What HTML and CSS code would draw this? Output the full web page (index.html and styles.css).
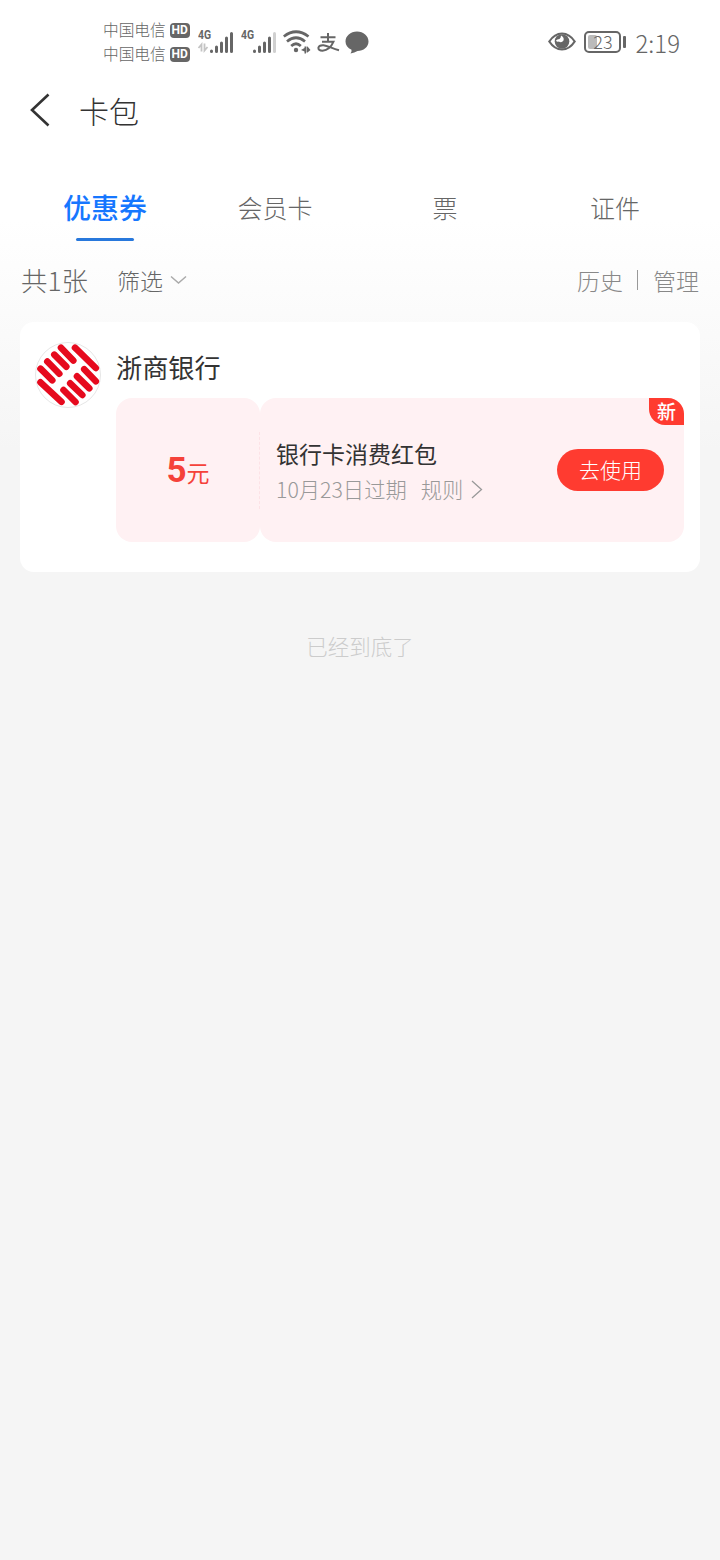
FILE: index.html
```html
<!DOCTYPE html>
<html lang="zh-CN">
<head>
    <meta charset="utf-8">
    <meta name="viewport" content="width=720">
    <title>卡包</title>
    <link rel="stylesheet" href="styles.css">
</head>
<body>
    <div class="status-bar">
        <div class="carriers">
            <div class="carrier"><span>中国电信</span><b class="hd">HD</b></div>
            <div class="carrier"><span>中国电信</span><b class="hd">HD</b></div>
        </div>
        <div class="signal">
            <span class="net">4G</span>
            <svg width="38" height="26" viewBox="0 0 38 26">
                <g fill="none" stroke="#c4c4c4" stroke-width="1.8"><path d="M4.500 22.500v-7l-3 3.500M7.500 14.500v7l3-3.500"/></g>
                <g stroke="#666" stroke-width="3" stroke-linecap="round"><path d="M14.500 22v.5M19.500 18v4.500M24.500 14v8.500M29.500 9v13.500M34.500 4.500v18"/></g>
            </svg>
        </div>
        <div class="signal">
            <span class="net">4G</span>
            <svg width="38" height="26" viewBox="0 0 38 26">
                <g stroke="#666" stroke-width="3" stroke-linecap="round"><path d="M14.500 22v.5M19.500 18v4.500M24.500 14v8.500M29.500 9v13.500"/></g>
                <path d="M34.500 4.500v18" stroke="#d0d0d0" stroke-width="3" stroke-linecap="round"/>
            </svg>
        </div>
        <svg class="wifi" width="28" height="24" viewBox="0 0 28 24">
            <g fill="none" stroke="#666" stroke-width="2.700">
                <path d="M.8 6.500Q13 -3 25.500 6.500"/>
                <path d="M4 11.500Q13 4 22 11.500"/>
                <path d="M8.200 16Q13 11.500 17.800 16"/>
            </g>
            <circle cx="13" cy="20" r="2.200" fill="#666"/>
            <path d="M18 20l3.500-2v-1.500h1.500v7h-1.500v-2zM27.500 20l-3 2.500h-1v-6h1z" fill="#666"/>
        </svg>
        <svg class="alipay" width="23" height="20" viewBox="0 0 23 20">
            <path d="M3.500 4.300h15M11 0v8.500M5 8.700h11.500Q13 17 5.500 17.700 1.200 17.500 1.400 14.800 1.900 12 6.500 12.200C11 12.700 15 15.500 22 17.200" fill="none" stroke="#666" stroke-width="2"/>
        </svg>
        <svg class="bubble" width="24" height="23" viewBox="0 0 24 23">
            <path d="M12 0.500C18.500 0.500 23.500 5 23.500 10.500S18.500 20 12.500 20Q9.500 21.800 5.500 22.500Q7 20.500 6.500 18.800C2.500 17 .5 14 .5 10.500.5 5 5.500.5 12 .5z" fill="#666"/>
        </svg>
        <div class="status-right">
            <svg class="eye" width="28" height="19" viewBox="0 0 28 19">
                <path d="M1.300 9.500Q6.500 1.500 14 1.500T26.700 9.500Q21.500 17.500 14 17.500T1.300 9.500z" fill="none" stroke="#666" stroke-width="2.200"/>
                <circle cx="14" cy="9.500" r="7.300" fill="#666"/>
                <path d="M13 3.500Q16.500 5.500 15.500 8.500 13.500 11.500 10.800 9.500 9 10.500 8 8.500 9 7 11.500 7 13 5.500 13 3.500z" fill="#fff"/>
            </svg>
            <div class="battery"><i></i><span>23</span></div>
            <div class="battery-tip"></div>
            <span class="time">2:19</span>
        </div>
    </div>

    <div class="title-bar">
        <svg width="20" height="34" viewBox="0 0 20 34"><path d="M18.500 1.500L2 17l16.500 15.500" fill="none" stroke="#333" stroke-width="2.600"/></svg>
        <h1>卡包</h1>
    </div>

    <div class="tabs">
        <div class="tab active">优惠券</div>
        <div class="tab">会员卡</div>
        <div class="tab">票</div>
        <div class="tab">证件</div>
    </div>

    <div class="toolbar">
        <span class="count">共1张</span>
        <span class="filter">筛选</span>
        <svg width="17" height="10" viewBox="0 0 17 10"><path d="M1 1.500l7.500 6.500L16 1.500" fill="none" stroke="#aaa" stroke-width="1.500"/></svg>
        <span class="history">历史</span>
        <i class="line"></i>
        <span class="manage">管理</span>
    </div>

    <div class="card">
        <svg class="logo" width="66" height="66" viewBox="0 0 66 66">
            <circle cx="33" cy="33" r="32.500" fill="#fff" stroke="#e6e6e6"/>
            <g stroke="#e60a1e" stroke-width="6.600" stroke-linecap="round">
                <path d="M40 5.700L60.800 26M26 5.700L38.300 18.500M19.300 12.700L31.300 24.700M12.300 19.500L24.300 31.700M5.500 26.700L17.300 38.300"/>
                <path d="M5.500 40.300L26.500 59.800M28.500 48L40.500 60M35.200 41.300L47.300 53M42 34.300L54.300 46.300M49.200 27.200L60.800 39.300"/>
            </g>
        </svg>
        <div class="card-main">
            <h2>浙商银行</h2>
            <div class="coupon">
                <div class="amount"><b>5</b><span>元</span></div>
                <div class="detail">
                    <div class="info">
                        <div class="name">银行卡消费红包</div>
                        <div class="rule">
                            <span>10月23日过期</span>
                            <span class="rule-link">规则</span>
                            <svg width="12" height="19" viewBox="0 0 12 19"><path d="M1 1l9.500 8.500L1 18" fill="none" stroke="#999" stroke-width="1.300"/></svg>
                        </div>
                    </div>
                    <div class="btn">去使用</div>
                    <span class="badge">新</span>
                </div>
            </div>
        </div>
    </div>

    <div class="end">已经到底了</div>
</body>
</html>
```

FILE: styles.css
```css
* {
    box-sizing: border-box;
}

body {
    margin: 0;
    min-height: 1560px;
    font-family: "Noto Sans CJK SC", sans-serif;
    font-weight: 300;
    color: #333;
    background: #f5f5f5 linear-gradient(#fff, #fff 220px, #f5f5f5 450px) no-repeat;
    white-space: nowrap;
}

h1, h2 {
    margin: 0;
    font-weight: 400;
}

svg {
    display: block;
    flex: none;
}

/* 状态栏 */
.status-bar {
    display: flex;
    height: 80px;
    padding: 18px 40px 0 103px;
    color: #666;
}

.carriers {
    width: 94px;
}

.carrier {
    display: flex;
    align-items: center;
    height: 24px;
    font-size: 15.7px;
    line-height: 24px;
}

.hd {
    width: 20px;
    height: 15px;
    margin: 0 0 0 4px;
    border-radius: 4px;
    background: #666;
    color: #fff;
    font: bold 12px/15px Roboto, sans-serif;
    text-align: center;
}

.signal {
    position: relative;
    width: 43px;
    padding-top: 11px;
}

.net {
    position: absolute;
    left: 1px;
    top: 10px;
    font: bold 13px/14px Roboto, sans-serif;
    transform: scaleX(.8);
    transform-origin: 0 0;
}

.wifi {
    margin-top: 12px;
}

.alipay {
    margin: 15px 0 0 6px;
}

.bubble {
    margin: 13px 0 0 5px;
}

.status-right {
    display: flex;
    align-items: center;
    height: 48px;
    margin-left: auto;
}

.eye {
    margin-top: -2px;
}

.battery {
    position: relative;
    width: 37px;
    height: 22px;
    margin-left: 8px;
    border: 2px solid #666;
    border-radius: 5px;
    font-size: 18px;
    line-height: 17px;
    text-align: center;
}

.battery span {
    position: relative;
}

.battery i {
    position: absolute;
    left: 2px;
    top: 2px;
    width: 9px;
    height: 14px;
    border-radius: 2px;
    background: #bbb;
}

.battery-tip {
    width: 3px;
    height: 12px;
    margin-left: 2px;
    border-radius: 1px;
    background: #666;
}

.time {
    margin-left: 9px;
    font-size: 24px;
    line-height: 29px;
}

/* 标题 */
.title-bar {
    display: flex;
    align-items: center;
    height: 60px;
    padding-left: 30px;
}

.title-bar h1 {
    margin-left: 29px;
    font-size: 30px;
    line-height: 60px;
    font-weight: 300;
}

/* 选项卡 */
.tabs {
    display: flex;
    height: 101px;
    padding: 36px 20px 0;
}

.tab {
    position: relative;
    flex: 1;
    height: 65px;
    font-size: 25px;
    line-height: 62px;
    text-align: center;
    color: #666;
}

.tab.active {
    font-size: 28px;
    font-weight: 500;
    color: #1677ff;
}

.tab.active:after {
    content: "";
    position: absolute;
    left: 50%;
    bottom: 0;
    width: 58px;
    height: 3px;
    margin-left: -29px;
    border-radius: 2px;
    background: #2878dc;
}

.toolbar {
    display: flex;
    align-items: center;
    height: 81px;
    padding: 0 21px 4px;
    font-size: 23px;
    line-height: 76px;
    color: #666;
}

.count {
    font-size: 26.4px;
}

.filter {
    margin: 0 7px 0 29px;
}

.history {
    margin-left: auto;
    color: #888;
}

.line {
    width: 1px;
    height: 20px;
    margin: 0 15px 0 14px;
    background: #999;
}

.manage {
    color: #888;
}

/* 卡券 */
.card {
    display: flex;
    height: 250px;
    margin: 0 20px;
    padding: 20px 16px 0 15px;
    border-radius: 14px;
    background: #fff;
}

.card-main {
    flex: 1;
    margin-left: 15px;
}

.card-main h2 {
    height: 56px;
    font-size: 26.2px;
    line-height: 50px;
}

.coupon {
    display: flex;
    height: 144px;
}

.amount,
.detail {
    border-radius: 16px;
    background: #fff1f3;
}

.amount {
    display: flex;
    align-items: baseline;
    justify-content: center;
    width: 144px;
    line-height: 145px;
    color: #f5423a;
}

.amount b {
    font-family: Roboto, sans-serif;
    font-size: 35px;
    font-weight: 700;
}

.amount span {
    font-size: 23px;
    font-weight: 400;
}

.detail {
    position: relative;
    display: flex;
    flex: 1;
    justify-content: space-between;
    padding: 0 20px 0 16px;
}

.detail:before {
    content: "";
    position: absolute;
    left: -1px;
    top: 34px;
    height: 77px;
    border-left: 1px dashed #fde2e6;
}

.info {
    padding-top: 37px;
}

.name {
    font-size: 23px;
    line-height: 36px;
    font-weight: 400;
}

.rule {
    display: flex;
    align-items: center;
    font-size: 21.3px;
    line-height: 36px;
    color: #999;
}

.rule-link {
    margin: 0 8px 0 14px;
}

.btn {
    width: 107px;
    height: 42px;
    margin-top: 51px;
    border-radius: 21px;
    background: #ff3b30;
    color: #fff;
    font-size: 21px;
    line-height: 41px;
    text-align: center;
}

.badge {
    position: absolute;
    right: 0;
    top: 0;
    width: 35px;
    height: 27px;
    border-radius: 0 16px 0 16px;
    background: #ff3b30;
    color: #fff;
    font-size: 19px;
    line-height: 25px;
    font-weight: 500;
    text-align: center;
}

.end {
    margin-top: 58px;
    font-size: 21.5px;
    line-height: 32px;
    text-align: center;
    color: #ccc;
}
```
